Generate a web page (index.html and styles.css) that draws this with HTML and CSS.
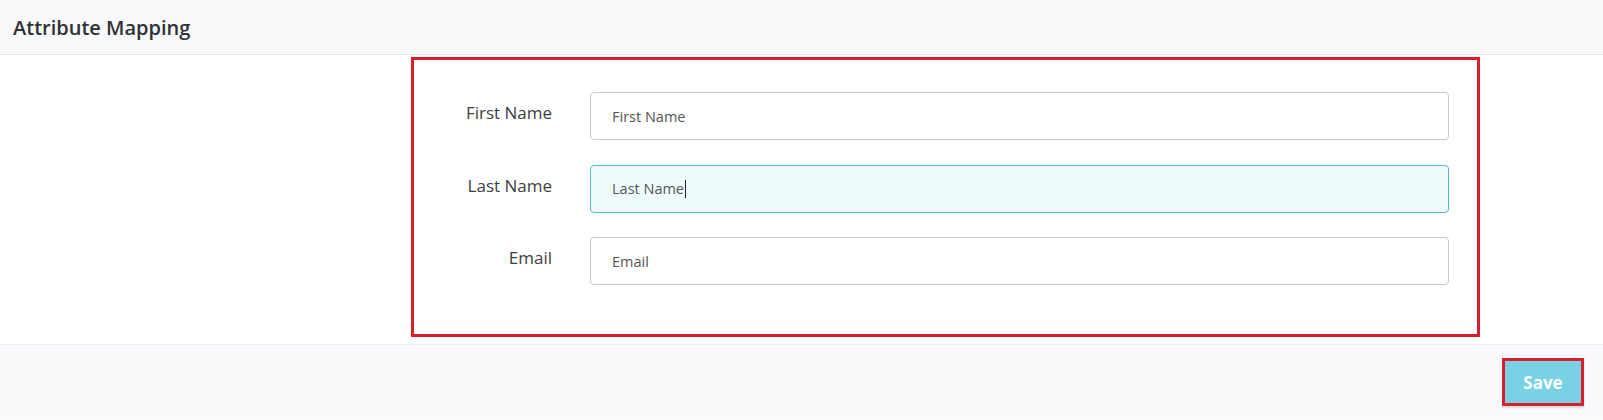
FILE: index.html
```html
<!DOCTYPE html>
<html lang="en">

<head>
    <meta charset="UTF-8">
    <meta name="viewport" content="width=device-width, initial-scale=1.0">
    <title>Attribute Mapping</title>
    <link rel="stylesheet" href="styles.css">
</head>

<body>
    <div class="panel">
        <div class="panel-heading">
            <h3>Attribute Mapping</h3>
        </div>

        <div class="panel-body">
            <div class="mapping-box">
                <div class="form-row">
                    <label for="firstName">First Name</label>
                    <input type="text" id="firstName" placeholder="First Name">
                </div>
                <div class="form-row">
                    <label for="lastName">Last Name</label>
                    <div class="field focused" id="lastName">Last Name<span class="caret"></span></div>
                </div>
                <div class="form-row">
                    <label for="email">Email</label>
                    <input type="text" id="email" placeholder="Email">
                </div>
            </div>
        </div>

        <div class="panel-footer">
            <button class="btn-save">Save</button>
        </div>
    </div>
</body>

</html>
```

FILE: styles.css
```css
body {
    margin: 0;
    font-family: "Open Sans", Arial, sans-serif;
    color: #333;
    background-color: #fff;
}

.panel-heading {
    height: 54px;
    padding: 0 13px;
    display: flex;
    align-items: center;
    background-color: #f8f9fb;
    border-bottom: 1px solid #e4e5e9;
}

.panel-heading h3 {
    margin: 0;
    font-size: 20px;
    font-weight: 600;
    color: #303134;
}

.panel-body {
    padding: 2px 0 7px 411px;
}

.mapping-box {
    width: 1069px;
    box-sizing: border-box;
    border: 3px solid #d81f2b;
    padding: 32px 28px 49px 0;
    display: flex;
    flex-direction: column;
    gap: 24.5px;
}

.form-row {
    display: grid;
    grid-template-columns: 138px 1fr;
    column-gap: 38px;
    align-items: start;
}

.form-row label {
    text-align: right;
    font-size: 17px;
    line-height: 23px;
    padding-top: 9px;
    color: #3d3e42;
}

input[type="text"],
.field {
    height: 48px;
    box-sizing: border-box;
    padding: 0 21px;
    border: 1px solid #c9c9cc;
    border-radius: 4px;
    background-color: #fff;
    font-family: "Open Sans", Arial, sans-serif;
    font-size: 14.5px;
    color: #555;
    outline: none;
}

input::placeholder {
    color: #555;
    opacity: 1;
}

.field {
    display: flex;
    align-items: center;
}

.field.focused {
    border-color: #52bccb;
    background-color: #effbfd;
}

.caret {
    display: inline-block;
    width: 1px;
    height: 18px;
    background-color: #222;
    margin-left: 1px;
}

.panel-footer {
    display: flex;
    justify-content: flex-end;
    padding: 13px 19px 14px;
    background-color: #fafafd;
    border-top: 1px solid #ececf0;
    height: 75px;
    box-sizing: border-box;
}

.btn-save {
    width: 82px;
    height: 48px;
    border: 3px solid #d81f2b;
    background-color: #78d2e3;
    color: #fff;
    font-family: "Open Sans", Arial, sans-serif;
    font-size: 17px;
    font-weight: 700;
    box-shadow: 0 2px 2px rgba(80, 120, 140, 0.25);
    cursor: pointer;
}
```
